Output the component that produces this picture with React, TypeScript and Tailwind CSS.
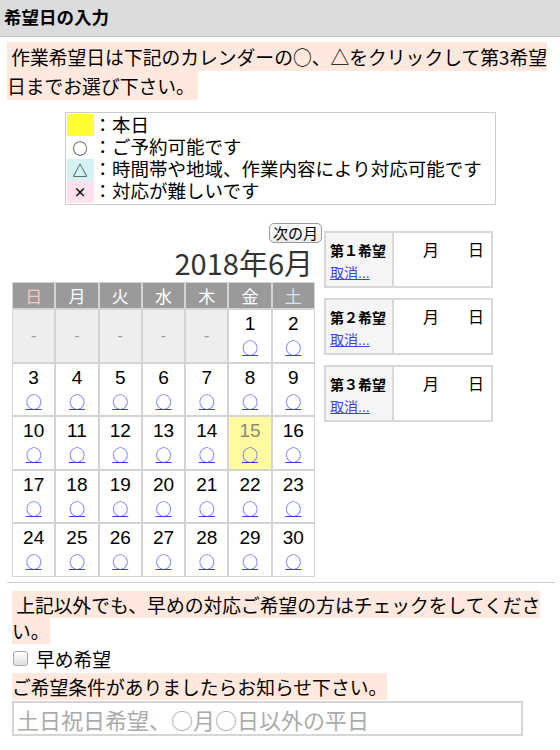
import React from "react";

const weekdays = [
  { label: "日", tone: "text-[#f5c6bf]" },
  { label: "月", tone: "text-white" },
  { label: "火", tone: "text-white" },
  { label: "水", tone: "text-white" },
  { label: "木", tone: "text-white" },
  { label: "金", tone: "text-white" },
  { label: "土", tone: "text-[#cfe7f6]" },
];

const TODAY = 15;

// June 2018 starts on a Friday
const cells: (number | null)[] = [null, null, null, null, null, ...Array.from({ length: 30 }, (_, i) => i + 1)];

const legend = [
  { mark: "", bg: "bg-[#ffff33]", text: "：本日", markSize: "text-[15px]" },
  { mark: "○", bg: "bg-white", text: "：ご予約可能です", markSize: "text-[15px]" },
  { mark: "△", bg: "bg-[#d4f2f2]", text: "：時間帯や地域、作業内容により対応可能です", markSize: "text-[15px]" },
  { mark: "×", bg: "bg-[#fde1ee]", text: "：対応が難しいです", markSize: "text-[13px] font-bold" },
];

function ChoiceBox({ label }: { label: string }) {
  return (
    <div className="flex h-[57px] w-[169px] border-2 border-[#d8d8d8] bg-white">
      <div className="w-[68px] border-r-2 border-[#d8d8d8] bg-[#f5f5f5] pl-[4px] pt-[10px]">
        <div className="text-[14px] font-bold leading-[16px]">{label}</div>
        <a href="#" className="mt-[6px] block text-[14px] leading-[16px] text-[#3a44ee] underline">
          取消...
        </a>
      </div>
      <div className="flex flex-1 justify-end gap-[29px] pr-[7px] pt-[9px] text-[16px] leading-[18px]">
        <span>月</span>
        <span>日</span>
      </div>
    </div>
  );
}

export default function App() {
  return (
    <div className="min-h-[750px] w-[560px] bg-white font-['Liberation_Sans','Noto_Sans_CJK_JP',sans-serif] text-black">
      <div className="flex h-[37px] items-center border-b border-[#c6c6c6] bg-[#dcdcdc] pl-[4px] text-[17.5px] font-bold">
        希望日の入力
      </div>

      <p className="mt-[5px] px-[7px] font-['Noto_Sans_CJK_JP',sans-serif] text-[18.8px] leading-[29px]">
        <span className="bg-[#ffe8dd] py-[1px] pr-[3px]">
          {"\u00a0"}作業希望日は下記のカレンダーの○、△をクリックして第3希望日までお選び下さい。
        </span>
      </p>

      <div className="mx-auto mt-[12px] w-[431px] border border-[#cccccc] p-[1px]">
        {legend.map((row) => (
          <div key={row.text} className="flex h-[22.25px] items-center">
            <div
              className={`flex h-full w-[27px] items-center justify-center overflow-hidden font-['Noto_Sans_CJK_JP',sans-serif] leading-none ${row.markSize} ${row.bg}`}
            >
              {row.mark}
            </div>
            <div className="text-[18.5px] leading-[21px]">{row.text}</div>
          </div>
        ))}
      </div>

      <div className="mt-[18px] flex pl-[12px]">
        <div className="flex w-[310px] flex-col">
          <button className="h-[20px] self-end rounded-[5px] border border-[#9a9a9a] bg-gradient-to-b from-white to-[#ececec] px-[3px] font-['Noto_Sans_CJK_JP',sans-serif] text-[15px] leading-[18px]">
            次の月
          </button>
          <div className="h-[39px] pr-[9px] text-right font-['Noto_Sans_CJK_JP',sans-serif] text-[29px] leading-[38px] text-[#333333]">
            2018年6月
          </div>
          <div className="grid w-[303px] grid-cols-7 gap-[2px] bg-[#d4d4d4] p-[1px]">
            {weekdays.map((d) => (
              <div
                key={d.label}
                className={`flex h-[25px] items-center justify-center bg-[#9a9a9a] font-['Noto_Sans_CJK_JP',sans-serif] text-[17px] leading-none ${d.tone}`}
              >
                {d.label}
              </div>
            ))}
            {cells.map((day, i) =>
              day === null ? (
                <div
                  key={`b${i}`}
                  className="flex h-[51.5px] items-center justify-center bg-[#eeeeee] text-[16px] text-[#999999]"
                >
                  -
                </div>
              ) : (
                <div
                  key={day}
                  className={`flex h-[51.5px] flex-col items-center pt-[3px] ${day === TODAY ? "bg-[#fdfb9e]" : "bg-white"}`}
                >
                  <span className={`text-[19px] leading-[22px] ${day === TODAY ? "text-[#8a8a7a]" : "text-black"}`}>
                    {day}
                  </span>
                  <a
                    href="#"
                    className="mt-[2px] font-['Noto_Sans_CJK_JP',sans-serif] text-[16px] leading-[20px] text-[#3a3aee] underline"
                  >
                    ○
                  </a>
                </div>
              )
            )}
          </div>
        </div>

        <div className="ml-[2px] flex flex-col gap-[10px] pt-[8px]">
          <ChoiceBox label="第１希望" />
          <ChoiceBox label="第２希望" />
          <ChoiceBox label="第３希望" />
        </div>
      </div>

      <div className="ml-[7px] mr-[5px] mt-[5px] border-t border-[#cccccc]" />

      <p className="mt-[9px] px-[12px] font-['Noto_Sans_CJK_JP',sans-serif] text-[18.8px] leading-[26.5px]">
        <span className="bg-[#ffe8dd]">{"\u00a0"}上記以外でも、早めの対応ご希望の方はチェックをしてください。</span>
      </p>

      <label className="mt-[2px] flex h-[24px] items-center pl-[13px]">
        <input
          type="checkbox"
          className="h-[15px] w-[15px] appearance-none rounded-[3px] border border-[#a8a8a8] bg-gradient-to-b from-white to-[#dedede]"
        />
        <span className="ml-[8px] font-['Noto_Sans_CJK_JP',sans-serif] text-[18.8px] leading-[22px]">早め希望</span>
      </label>

      <p className="mt-[3px] px-[12px] font-['Noto_Sans_CJK_JP',sans-serif] text-[18.8px] leading-[26.5px]">
        <span className="bg-[#ffe8dd]">ご希望条件がありましたらお知らせ下さい。</span>
      </p>

      <input
        type="text"
        placeholder="土日祝日希望、○月○日以外の平日"
        className="ml-[12px] mt-[1px] h-[35px] w-[511px] border-2 border-[#d6d6d6] px-[3px] font-['Noto_Sans_CJK_JP',sans-serif] text-[22px] outline-none placeholder:text-[#ababab]"
      />
    </div>
  );
}
